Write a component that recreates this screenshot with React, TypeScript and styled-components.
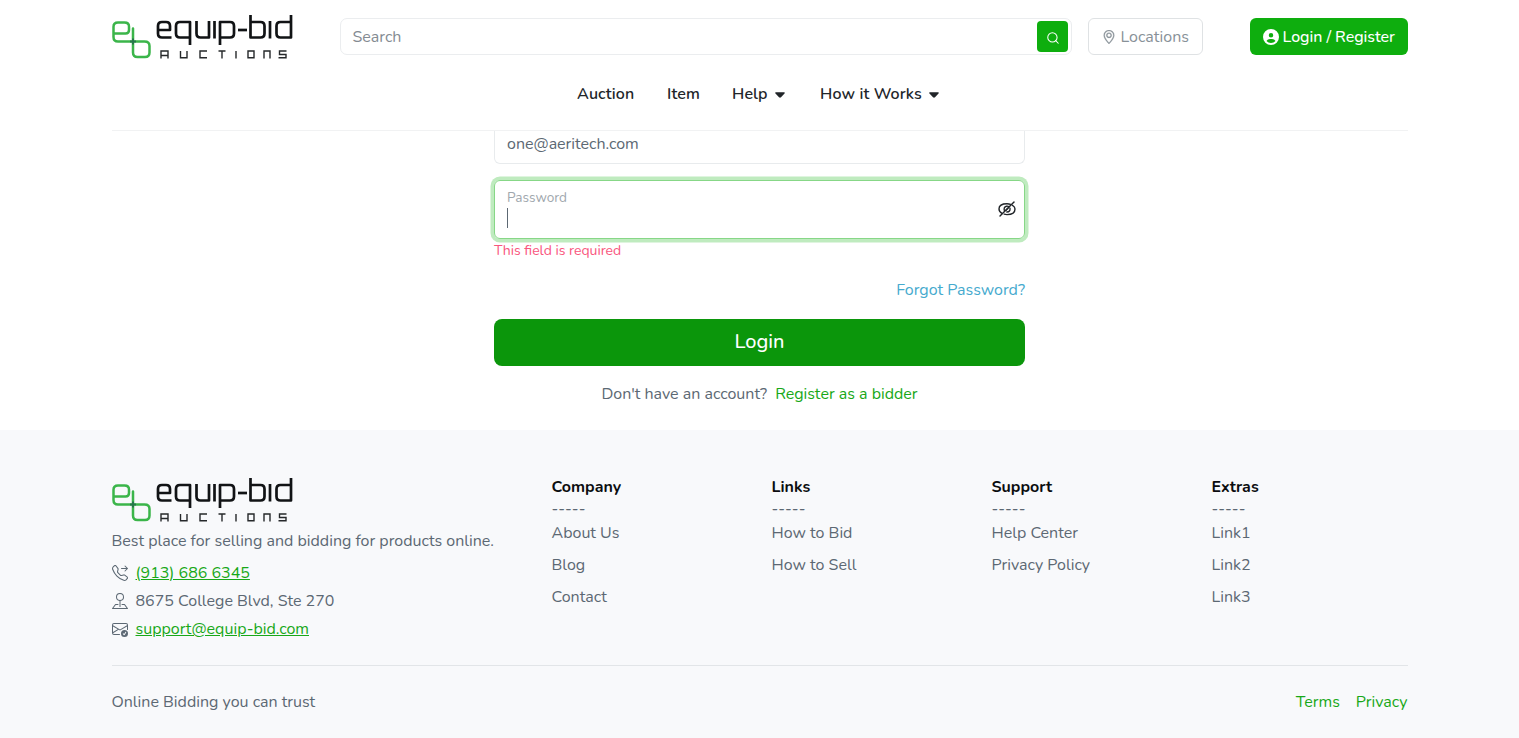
import React from 'react';
import styled, { createGlobalStyle } from 'styled-components';
import { BsTelephoneForward, BsPinMap, BsEnvelopeCheck, BsGeoAlt } from 'react-icons/bs';
import { FaCircleUser } from 'react-icons/fa6';
import { Search } from 'lucide-react';

const GlobalStyle = createGlobalStyle`
  * { box-sizing: border-box; }
  body {
    margin: 0;
    height: 738px;
    overflow: hidden;
    background: #fff;
    color: #5c6873;
    font: 400 16px/24px Nunito, Lato, sans-serif;
  }
`;

const Page = styled.div`
  height: 738px;
  display: flex;
  flex-direction: column;
`;

const Container = styled.div`
  width: 1296px;
  margin: 0 auto;
`;

const Header = styled.header`
  height: 131px;
  flex: none;
  border-bottom: 1px solid #f1f2f3;
`;

const TopBar = styled.div`
  display: flex;
  align-items: center;
  height: 73px;
`;

const Text = styled.span`
  white-space: pre;
`;

const LogoSvg = styled.svg`
  display: block;
  width: 182px;
  height: 46px;
  flex: none;
`;

const SearchBox = styled.div`
  display: flex;
  align-items: center;
  justify-content: space-between;
  width: 732px;
  height: 37.6px;
  margin: 0 16px 0 46px;
  padding: 0 3px 0 12px;
  border: 1px solid #ebedef;
  border-radius: 7px;
  color: #848b92;
`;

const SearchButton = styled.button`
  display: flex;
  align-items: center;
  justify-content: center;
  width: 31px;
  height: 31px;
  padding: 2px 0 0 1px;
  border: 0;
  border-radius: 4px;
  background: #0eae0e;
  color: #fff;
`;

const LocationsButton = styled.button`
  display: flex;
  align-items: center;
  gap: 5px;
  width: 115px;
  height: 37.6px;
  padding: 0 0 0 13px;
  border: 1px solid #dfe2e4;
  border-radius: 6px;
  background: #fff;
  color: #889198;
  font: inherit;

  svg { stroke: currentColor; stroke-width: 0.4px; }
`;

const AccountButton = styled.button`
  display: flex;
  align-items: center;
  gap: 4px;
  width: 158px;
  height: 37.6px;
  margin-left: auto;
  padding: 0 0 0 13px;
  border: 0;
  border-radius: 6px;
  background: #0eae0e;
  color: #fff;
  font: inherit;
  font-weight: 500;
  letter-spacing: -0.05px;
`;

const Nav = styled.nav`
  display: flex;
  justify-content: center;
  gap: 32px;
  padding-top: 9px;
  color: #212529;
  font-weight: 600;
  letter-spacing: 0.12px;
`;

const NavItem = styled.a<{ $width: number }>`
  display: flex;
  align-items: center;
  gap: 7px;
  width: ${(p) => p.$width}px;

  svg { margin-top: 2px; }
`;

const Form = styled.main`
  display: flex;
  flex-direction: column;
  width: 531px;
  height: 299px;
  flex: none;
  margin: 0 auto;
`;

const EmailField = styled.div`
  height: 33px;
  padding: 1px 12px 0;
  border: 1px solid #e8ebed;
  border-top: 0;
  border-radius: 0 0 6px 6px;
`;

const PasswordField = styled.div`
  display: flex;
  align-items: center;
  justify-content: space-between;
  height: 59px;
  margin-top: 16px;
  padding: 0 8px 2px 12px;
  border: 1px solid #87d787;
  border-radius: 6px;
  box-shadow: 0 0 0 3.5px #bfebbf;
`;

const FieldBody = styled.div`
  display: flex;
  flex-direction: column;
  gap: 1px;
  padding-bottom: 2px;
  color: #a0a7ad;
  font-size: 13.6px;
  line-height: 19px;
`;

const Caret = styled.i`
  width: 1px;
  height: 20px;
  background: #5c6873;
`;

const ErrorText = styled.div`
  height: 24px;
  color: #f9557d;
  font-size: 14px;
`;

const Forgot = styled.a`
  align-self: flex-end;
  margin-top: 15px;
  color: #46aace;
`;

const SubmitButton = styled.button`
  height: 47px;
  flex: none;
  margin-top: 17px;
  padding: 0 0 2px;
  border: 0;
  border-radius: 8px;
  background: #0b960b;
  color: #fff;
  font: inherit;
  font-size: 20px;
  font-weight: 500;
`;

const Register = styled.p`
  display: flex;
  justify-content: center;
  gap: 8px;
  margin: 16px 0 0;
`;

const GreenLink = styled.a<{ $underline?: boolean }>`
  color: #18a818;
  text-decoration: ${(p) => (p.$underline ? 'underline' : 'none')};
`;

const Footer = styled.footer`
  flex: 1;
  background: #f8f9fb;
`;

const FooterTop = styled.div`
  display: flex;
  height: 236px;
  padding-top: 47px;
  border-bottom: 1px solid #e2e5e8;
`;

const Brand = styled.div`
  flex: none;
  width: 440px;
`;

const Tagline = styled.p`
  margin: 6px 0 8px;
`;

const ContactRow = styled.div`
  display: flex;
  align-items: center;
  gap: 8px;
  height: 24px;
  margin-bottom: 4px;
`;

const Column = styled.div`
  display: flex;
  flex: none;
  flex-direction: column;
  width: 220px;
`;

const ColumnTitle = styled.h6`
  margin: -2px 0 0;
  color: #0b0d0f;
  font-size: 16px;
  font-weight: 700;
  line-height: 24px;
`;

const Dashes = styled.div`
  height: 20px;
  line-height: 20px;
`;

const ColumnLink = styled.a`
  margin: 2px 0 6px;
`;

const FooterBottom = styled.div`
  display: flex;
  justify-content: space-between;
  padding-top: 24px;
`;

const Legal = styled.div`
  display: flex;
  gap: 16px;
`;

function Logo() {
  return (
    <LogoSvg viewBox="0.5 0.5 182 46" fill="none">
      <g stroke="#3bb54a" strokeWidth="2.5" strokeLinejoin="round" strokeLinecap="round">
        <path d="M2 20H14Q17.500 20 17.500 16.500V13Q17.500 9 13 9H6.500Q2 9 2 13.300V23.500Q2 28 6.500 28H33Q38 28 38 32.500V39Q38 43.500 33.500 43.500H26Q21.500 43.500 21.500 39V15" />
      </g>
      <path d="M21.500 25V31M18.500 28H24.500" stroke="#26774b" strokeWidth="2" />
      <g stroke="#111315" strokeWidth="2.700" strokeLinejoin="round">
        <path d="M60 24H50.500Q46.500 24 46.500 20V12.500Q46.500 8.500 50.500 8.500H54.500Q58.500 8.500 58.500 12.500V16.500H46.500" />
        <path d="M78.500 31.500V8.500H68.500Q64.500 8.500 64.500 12.500V20Q64.500 24 68.500 24H78.500" />
        <path d="M85 7.500V20Q85 24 89 24H97.500V7.500" />
        <path d="M103 7.500V25" />
        <path d="M108.500 31.500V8.500H118.500Q122.500 8.500 122.500 12.500V20Q122.500 24 118.500 24H108.500" />
        <path d="M126.500 16.500H135.500" />
        <path d="M139 1.500V24H149Q153 24 153 20V12.500Q153 8.500 149 8.500H139" />
        <path d="M158.500 7.500V25" />
        <path d="M179.500 1.500V24H169Q165 24 165 20V12.500Q165 8.500 169 8.500H179.500" />
      </g>
      <g stroke="#25282a" strokeWidth="1.400">
        <path d="M49.500 45V37.500H56.500V45M49.500 42H56.500M69 37.500V44.300H75.500V37.500M95.500 37.500H88.500V44.300H95.500M107 37.500H114M110.500 37.500V45M124.500 37.500V45M136.500 37.500H142.500V44.300H136.500ZM152.500 45V37.500H158.500V45M175 37.500H168V41H174.500V44.300H167" />
      </g>
    </LogoSvg>
  );
}

function CaretDown() {
  return (
    <svg width="10" height="6" viewBox="0 0 10 6">
      <path d="M.8 .3h8.400q1 .2 .3 1.100L6 5.300q-1 .8-2 0L.5 1.400Q-.2 .5 .8 .3Z" fill="#212529" />
    </svg>
  );
}

function EyeHidden() {
  return (
    <svg width="18" height="18" viewBox="0 0 18 18" fill="none" stroke="#212529" strokeWidth="1.4" strokeLinecap="round">
      <path d="M4 13.400Q1 11.800 1 9Q1 3.800 9 3.800Q11 3.800 12.500 4.300M14.500 5.300Q17 6.700 17 9Q17 14.600 9 14.600Q7.500 14.600 6.200 14.200" />
      <path d="M6.500 11Q5.200 7 8.500 6.200Q10 6 11 6.800M12 8.300Q12.500 12 8.800 12" />
      <path d="M8 10.300L10 8.300" />
      <path d="M2 16L16 2" />
    </svg>
  );
}

const columns = [
  { title: 'Company', links: ['About Us', 'Blog', 'Contact'] },
  { title: 'Links', links: ['How to Bid', 'How to Sell'] },
  { title: 'Support', links: ['Help Center', 'Privacy Policy'] },
  { title: 'Extras', links: ['Link1', 'Link2', 'Link3'] },
];

export default function App() {
  return (
    <Page>
      <GlobalStyle />
      <Container>
        <Header>
          <TopBar>
            <Logo />
            <SearchBox>
              <Text>Search</Text>
              <SearchButton aria-label="Search"><Search size={14} strokeWidth={1.8} /></SearchButton>
            </SearchBox>
            <LocationsButton><BsGeoAlt size={14} /><Text>Locations</Text></LocationsButton>
            <AccountButton><FaCircleUser size={16} /><Text>Login / Register</Text></AccountButton>
          </TopBar>
          <Nav>
            <NavItem $width={58}><Text>Auction</Text></NavItem>
            <NavItem $width={33}><Text>Item</Text></NavItem>
            <NavItem $width={56}><Text>Help</Text><CaretDown /></NavItem>
            <NavItem $width={122}><Text>How it Works</Text><CaretDown /></NavItem>
          </Nav>
        </Header>
      </Container>
      <Form>
        <EmailField><Text>one@aeritech.com</Text></EmailField>
        <PasswordField>
          <FieldBody><Text>Password</Text><Caret /></FieldBody>
          <EyeHidden />
        </PasswordField>
        <ErrorText><Text>This field is required</Text></ErrorText>
        <Forgot><Text>Forgot Password?</Text></Forgot>
        <SubmitButton><Text>Login</Text></SubmitButton>
        <Register>
          <Text>Don't have an account?</Text>
          <GreenLink><Text>Register as a bidder</Text></GreenLink>
        </Register>
      </Form>
      <Footer>
        <Container>
          <FooterTop>
            <Brand>
              <Logo />
              <Tagline><Text>Best place for selling and bidding for products online.</Text></Tagline>
              <ContactRow><BsTelephoneForward /><GreenLink $underline><Text>(913) 686 6345</Text></GreenLink></ContactRow>
              <ContactRow><BsPinMap /><Text>8675 College Blvd, Ste 270</Text></ContactRow>
              <ContactRow><BsEnvelopeCheck /><GreenLink $underline><Text>support@equip-bid.com</Text></GreenLink></ContactRow>
            </Brand>
            {columns.map((c) => (
              <Column key={c.title}>
                <ColumnTitle><Text>{c.title}</Text></ColumnTitle>
                <Dashes><Text>-----</Text></Dashes>
                {c.links.map((l) => <ColumnLink key={l}><Text>{l}</Text></ColumnLink>)}
              </Column>
            ))}
          </FooterTop>
          <FooterBottom>
            <Text>Online Bidding you can trust</Text>
            <Legal>
              <GreenLink><Text>Terms</Text></GreenLink>
              <GreenLink><Text>Privacy</Text></GreenLink>
            </Legal>
          </FooterBottom>
        </Container>
      </Footer>
    </Page>
  );
}
